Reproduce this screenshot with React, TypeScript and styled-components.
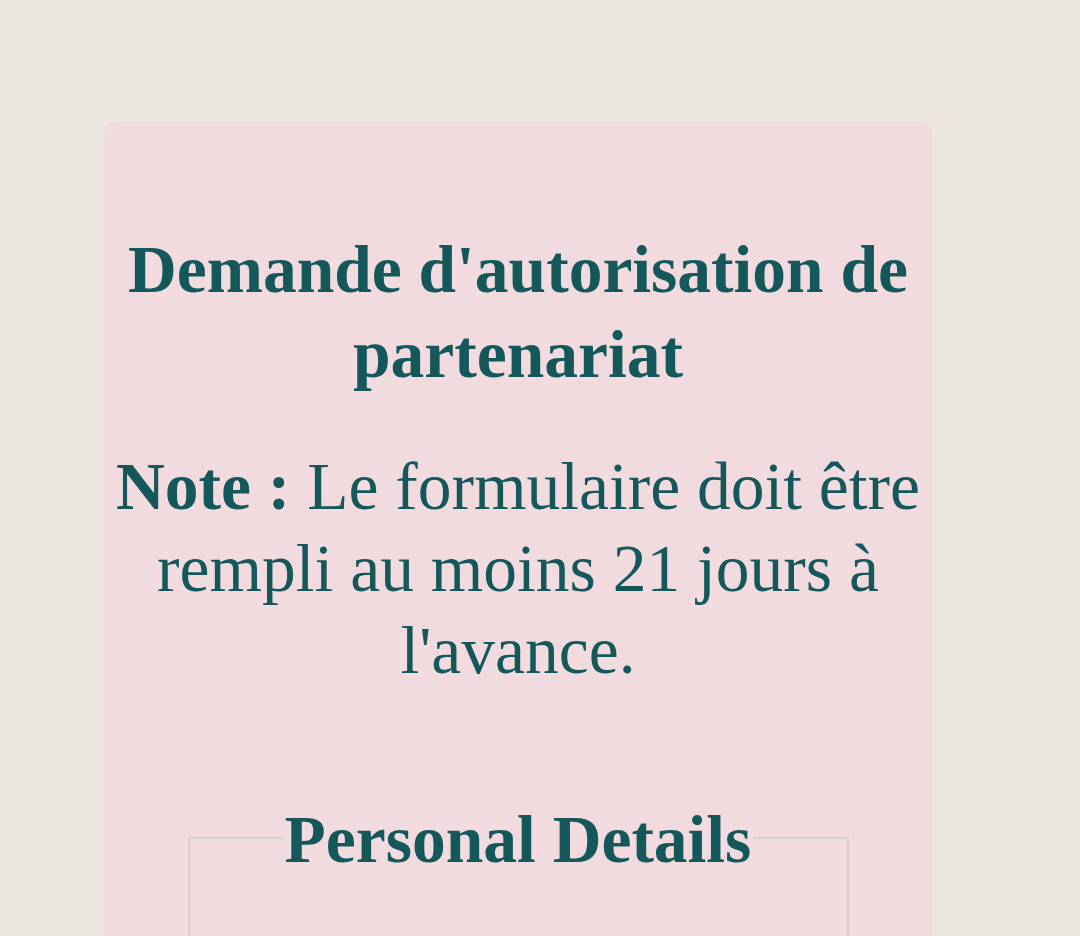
import React from "react";
import styled, { createGlobalStyle } from "styled-components";

const GlobalStyle = createGlobalStyle`
  html, body {
    margin: 0;
    padding: 0;
    background: #ebe6e0;
  }
  body {
    font-family: "Liberation Serif", "Times New Roman", serif;
  }
`;

const Page = styled.div`
  padding: 122px 0 40px 104px;
`;

const Card = styled.main`
  width: 828px;
  box-sizing: border-box;
  background: #f2dbde;
  border-radius: 10px;
  padding: 105px 0 40px;
  display: flex;
  flex-direction: column;
  align-items: center;
  color: #14585c;
`;

const Title = styled.h1`
  margin: 0;
  font-size: 67.5px;
  line-height: 85px;
  font-weight: 700;
  text-align: center;
  width: 820px;
`;

const Note = styled.p`
  margin: 49px 0 0;
  font-size: 67.5px;
  line-height: 82px;
  font-weight: 400;
  text-align: center;
  width: 826px;
`;

const Fieldset = styled.fieldset`
  margin: 108px 0 0;
  width: 661px;
  box-sizing: border-box;
  min-height: 320px;
  border: 2px solid #d4d0cf;
  padding: 0 20px 20px;
`;

const Legend = styled.legend`
  margin: 0 auto;
  padding: 4px 2px 0;
  font-size: 67.5px;
  line-height: 71px;
  font-weight: 700;
`;

export default function App() {
  return (
    <>
      <GlobalStyle />
      <Page>
        <Card>
          <Title>Demande d'autorisation de partenariat</Title>
          <Note>
            <b>Note :</b> Le formulaire doit être rempli au moins 21 jours à l'avance.
          </Note>
          <Fieldset>
            <Legend>Personal Details</Legend>
          </Fieldset>
        </Card>
      </Page>
    </>
  );
}
